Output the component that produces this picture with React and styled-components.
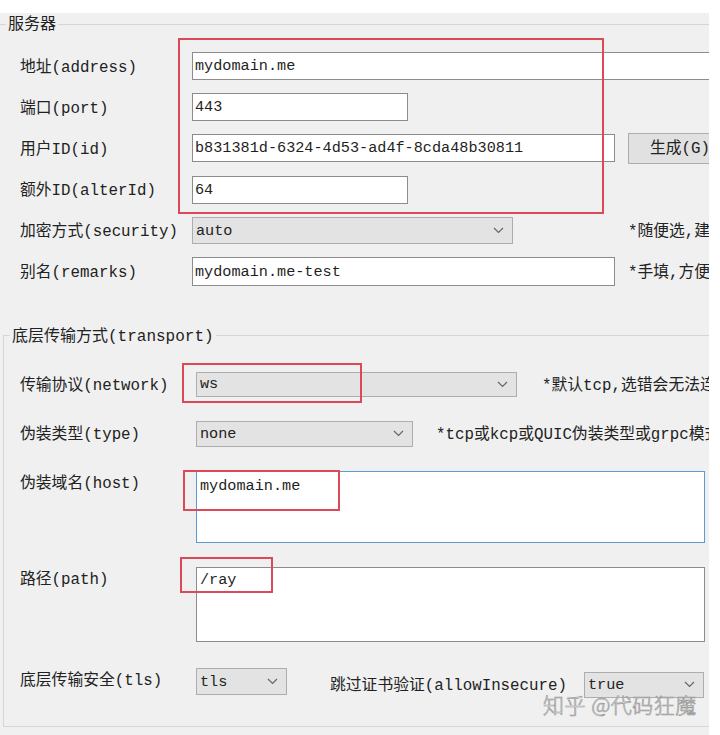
import React from "react";
import styled, { createGlobalStyle } from "styled-components";

const Global = createGlobalStyle`
  html, body { margin: 0; padding: 0; background: #ffffff; }
  body { font-family: "Liberation Mono", "Noto Sans CJK SC", monospace; }
`;

const Panel = styled.div`
  position: relative;
  margin-top: 13px;
  width: 709px;
  height: 722px;
  background: #f0f0f0;
  overflow: hidden;
  color: #1f1f1f;
  font-size: 15.8px;
  line-height: 20px;
`;

const Group = styled.fieldset`
  box-sizing: border-box;
  width: 760px;
  min-width: 0;
  margin: ${(p) => p.$mt || 0}px 0 0 ${(p) => p.$ml || 0}px;
  padding: 0;
  border: 1px solid #d6d6d6;
  border-right: none;
  ${(p) => p.$open && "border-left: none; border-bottom: none;"}
`;

const Legend = styled.legend`
  margin-left: 6px;
  padding: 2px 2px 0;
  font-size: 16px;
  line-height: 20px;
  color: #222;
  white-space: nowrap;
`;

const ServerGrid = styled.div`
  display: grid;
  grid-template-columns: 159px 423px auto;
  grid-auto-rows: 28px;
  column-gap: 13px;
  row-gap: 13.2px;
  padding: 17px 0 0 20px;
`;

const Label = styled.div`
  align-self: center;
  padding-top: 3px;
  white-space: nowrap;
  color: #222;
`;

const TextBox = styled.div`
  box-sizing: border-box;
  align-self: center;
  width: ${(p) => (p.$w ? `${p.$w}px` : "100%")};
  height: ${(p) => p.$h || 28}px;
  ${(p) => p.$span && "grid-column: 2 / span 2; width: 540px;"}
  background: #ffffff;
  border: 1px solid #8c8c8c;
  padding: 0 2px;
  display: flex;
  align-items: center;
  font-size: 15.2px;
  white-space: nowrap;
  overflow: hidden;
`;

const Select = styled.div`
  box-sizing: border-box;
  align-self: center;
  flex: none;
  width: ${(p) => p.$w}px;
  height: ${(p) => p.$h || 26}px;
  background: #e3e3e3;
  border: 1px solid #adadad;
  padding: 0 8px 0 3px;
  display: flex;
  align-items: center;
  justify-content: space-between;
  font-size: 15.2px;
  color: #222;
`;

const Button = styled.div`
  box-sizing: border-box;
  align-self: center;
  width: 104px;
  height: 31px;
  margin: -1.5px 0;
  padding-top: 2px;
  background: #e1e1e1;
  border: 1px solid #adadad;
  display: flex;
  align-items: center;
  justify-content: center;
  color: #222;
  white-space: nowrap;
`;

const Note = styled.div`
  align-self: center;
  padding-top: 3px;
  white-space: nowrap;
  color: #222;
  margin-left: ${(p) => p.$ml || 0}px;
`;

const TransportBody = styled.div`
  display: flex;
  flex-direction: column;
  gap: 24px;
  padding: 25px 0 28px 16px;
`;

const Row = styled.div`
  display: flex;
  align-items: ${(p) => (p.$top ? "flex-start" : "center")};
`;

const RowLabel = styled.div`
  flex: none;
  width: 176px;
  padding-top: 3px;
  white-space: nowrap;
  color: #222;
  line-height: ${(p) => p.$lh || 20}px;
`;

const Memo = styled.div`
  box-sizing: border-box;
  flex: none;
  width: 509px;
  height: ${(p) => p.$h}px;
  background: #ffffff;
  border: 1px solid ${(p) => (p.$focus ? "#5b9bd5" : "#8c8c8c")};
  padding: ${(p) => p.$pt}px 3px 0;
  font-size: 15.2px;
  line-height: 20px;
`;

const SubGroup = styled.div`
  display: flex;
  align-items: center;
  gap: 17px;
  margin: 6px 0 0 43px;
`;

const Mark = styled.div`
  position: absolute;
  box-sizing: border-box;
  border: 2px solid #dc4a5a;
  pointer-events: none;
`;

const Watermark = styled.div`
  position: absolute;
  left: 543px;
  top: 679px;
  font-family: "Noto Sans CJK SC", sans-serif;
  font-weight: 300;
  font-size: 21px;
  line-height: 24px;
  letter-spacing: 0.5px;
  color: rgba(255, 255, 255, 0.85);
  -webkit-text-stroke: 0.7px #9a9a9a;
  white-space: nowrap;
`;

const Chevron = () => (
  <svg width="11" height="7" viewBox="0 0 11 7">
    <polyline
      points="1,1 5.5,5.5 10,1"
      fill="none"
      stroke="#666"
      strokeWidth="1.2"
    />
  </svg>
);

const Combo = ({ value, w, h }) => (
  <Select $w={w} $h={h}>
    <span>{value}</span>
    <Chevron />
  </Select>
);

const marks = [
  { left: 178, top: 25, width: 426, height: 176 },
  { left: 182, top: 350, width: 180, height: 40 },
  { left: 183, top: 457, width: 157, height: 41 },
  { left: 180, top: 544, width: 93, height: 36 },
];

export default function App() {
  return (
    <>
      <Global />
      <Panel>
        <Group $open>
          <Legend>服务器</Legend>
          <ServerGrid>
            <Label>地址(address)</Label>
            <TextBox $span>mydomain.me</TextBox>

            <Label>端口(port)</Label>
            <TextBox $w={216}>443</TextBox>
            <span />

            <Label>用户ID(id)</Label>
            <TextBox>b831381d-6324-4d53-ad4f-8cda48b30811</TextBox>
            <Button>生成(G)</Button>

            <Label>额外ID(alterId)</Label>
            <TextBox $w={216}>64</TextBox>
            <span />

            <Label>加密方式(security)</Label>
            <Combo value="auto" w={321} h={27} />
            <Note>*随便选,建议(auto)</Note>

            <Label>别名(remarks)</Label>
            <TextBox $h={29}>mydomain.me-test</TextBox>
            <Note>*手填,方便识别管理</Note>
          </ServerGrid>
        </Group>

        <Group $mt={39} $ml={3}>
          <Legend>底层传输方式(transport)</Legend>
          <TransportBody>
            <Row>
              <RowLabel>传输协议(network)</RowLabel>
              <Combo value="ws" w={321} h={25} />
              <Note $ml={25}>*默认tcp,选错会无法连接</Note>
            </Row>
            <Row>
              <RowLabel>伪装类型(type)</RowLabel>
              <Combo value="none" w={217} h={26} />
              <Note $ml={23}>*tcp或kcp或QUIC伪装类型或grpc模式</Note>
            </Row>
            <Row $top>
              <RowLabel>伪装域名(host)</RowLabel>
              <Memo $h={72} $pt={4} $focus>
                mydomain.me
              </Memo>
            </Row>
            <Row $top>
              <RowLabel>路径(path)</RowLabel>
              <Memo $h={75} $pt={2}>
                /ray
              </Memo>
            </Row>
            <Row $top>
              <RowLabel $lh={24}>底层传输安全(tls)</RowLabel>
              <Combo value="tls" w={91} h={27} />
              <SubGroup>
                <Label>跳过证书验证(allowInsecure)</Label>
                <Combo value="true" w={120} h={26} />
              </SubGroup>
            </Row>
          </TransportBody>
        </Group>

        {marks.map((m, i) => (
          <Mark key={i} style={m} />
        ))}
        <Watermark>知乎 @代码狂魔</Watermark>
      </Panel>
    </>
  );
}
